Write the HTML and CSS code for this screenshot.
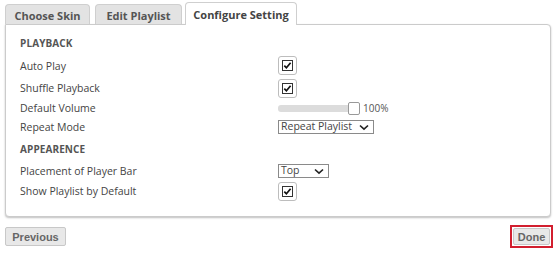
FILE: index.html
```html
<!DOCTYPE html>
<html>
<head>
<meta charset="utf-8">
<link rel="stylesheet" href="styles.css">
</head>
<body>
<div class="wrap">
  <div class="tabs">
    <div class="tab t1">Choose Skin</div>
    <div class="tab t2">Edit Playlist</div>
    <div class="tab t3 active">Configure Setting</div>
  </div>
  <div class="panel">
    <div class="row h-head1"><div class="head">PLAYBACK</div></div>
    <div class="row h-r1"><div class="label">Auto Play</div><div class="ctl"><span class="cb"><svg width="11" height="11" viewBox="0 0 11 11"><rect x="0.5" y="0.5" width="10" height="10" fill="#fff" stroke="#333"/><path d="M2.3 5.6 L4.4 7.8 L8.6 2.8" fill="none" stroke="#111" stroke-width="1.7"/></svg></span></div></div>
    <div class="row h-r2"><div class="label">Shuffle Playback</div><div class="ctl"><span class="cb"><svg width="11" height="11" viewBox="0 0 11 11"><rect x="0.5" y="0.5" width="10" height="10" fill="#fff" stroke="#333"/><path d="M2.3 5.6 L4.4 7.8 L8.6 2.8" fill="none" stroke="#111" stroke-width="1.7"/></svg></span></div></div>
    <div class="row h-r3"><div class="label">Default Volume</div><div class="ctl"><span class="slider"><span class="thumb"></span></span><span class="pct">100%</span></div></div>
    <div class="row h-r4"><div class="label">Repeat Mode</div><div class="ctl"><span class="sel w-repeat">Repeat Playlist<svg class="chev" width="10" height="7" viewBox="0 0 10 7"><path d="M1 1.5 L5 5.2 L9 1.5" fill="none" stroke="#222" stroke-width="1.6"/></svg></span></div></div>
    <div class="row h-head2"><div class="head">APPEARENCE</div></div>
    <div class="row h-r5"><div class="label">Placement of Player Bar</div><div class="ctl"><span class="sel w-top">Top<svg class="chev" width="10" height="7" viewBox="0 0 10 7"><path d="M1 1.5 L5 5.2 L9 1.5" fill="none" stroke="#222" stroke-width="1.6"/></svg></span></div></div>
    <div class="row h-r6"><div class="label">Show Playlist by Default</div><div class="ctl"><span class="cb"><svg width="11" height="11" viewBox="0 0 11 11"><rect x="0.5" y="0.5" width="10" height="10" fill="#fff" stroke="#333"/><path d="M2.3 5.6 L4.4 7.8 L8.6 2.8" fill="none" stroke="#111" stroke-width="1.7"/></svg></span></div></div>
  </div>
  <div class="footer">
    <button class="btn prev">Previous</button>
    <span class="done-ring"><button class="btn done">Done</button></span>
  </div>
</div>
</body>
</html>
```

FILE: styles.css
```css
* { box-sizing: border-box; }
html, body { margin: 0; padding: 0; background: #fff; }
body { font-family: "Open Sans", "Liberation Sans", sans-serif; color: #444; }
.wrap { width: 560px; padding: 3px 9px 0 5px; }
.tabs { display: flex; align-items: flex-end; height: 21px; position: relative; z-index: 2; }
.tab {
  height: 20px; border: 1px solid #cfcfcf; border-bottom: none; border-radius: 4px 4px 0 0;
  background: #e3e3e3; font-size: 11px; font-weight: 700; color: #555;
  display: flex; align-items: center; justify-content: center; padding-top: 1px;
}
.t1 { width: 85px; }
.t2 { width: 87px; margin-left: 5px; }
.t3 { width: 112px; margin-left: 3px; }
.tab.active { height: 23px; background: #fff; margin-bottom: -1px; color: #444; }
.panel {
  border: 1px solid #cbcbcb; border-radius: 0 4px 4px 4px; background: #fff;
  box-shadow: 0 1px 2px rgba(0,0,0,0.25);
  padding: 7px 0 14px 14px; height: 193px;
}
.row { display: flex; align-items: center; }
.label { width: 258px; font-size: 10.5px; color: #444; }
.head { font-size: 10px; font-weight: 700; color: #555; letter-spacing: 0.1px; }
.ctl { display: flex; align-items: center; }
.h-head1 { height: 22px; }
.h-r1 { height: 23px; }
.h-r2 { height: 22px; }
.h-r3 { height: 18px; }
.h-r4 { height: 19px; }
.h-head2 { height: 26px; }
.h-r5 { height: 17px; }
.h-r6 { height: 24px; }
.cb {
  width: 19px; height: 19px; border: 1px solid #bdbdbd; border-radius: 3px; background: #fff;
  display: flex; align-items: center; justify-content: center;
}
.cb svg { display: block; }
.slider { width: 74px; height: 7px; background: #dcdcdc; border-radius: 3px; position: relative; }
.thumb {
  position: absolute; left: 70px; top: -3px; width: 12px; height: 13px;
  background: #fff; border: 1px solid #999; border-radius: 2px;
}
.pct { margin-left: 11px; font-size: 10px; color: #555; }
.sel {
  height: 14px; border: 1px solid #8a8a8a; background: #fff; font-size: 10.5px; color: #444;
  display: flex; align-items: center; padding-left: 2px; position: relative; line-height: 1;
}
.w-repeat { width: 96px; }
.w-top { width: 51px; }
.chev { position: absolute; right: 4px; top: 3px; }
.footer { display: flex; justify-content: space-between; align-items: center; margin-top: 8px; }
.btn {
  font-family: "Liberation Sans", Arial, sans-serif; font-weight: 700; font-size: 11px; color: #666;
  background: #e8e8e8; border: 1px solid #c8c8c8; border-radius: 2px; margin: 0; cursor: pointer;
}
.prev { width: 61px; height: 19px; padding: 0; }
.done-ring { border: 2px solid #d21f2f; padding: 1px; display: flex; margin-right: -2px; }
.done { width: 37px; height: 17px; padding: 0; }
```
